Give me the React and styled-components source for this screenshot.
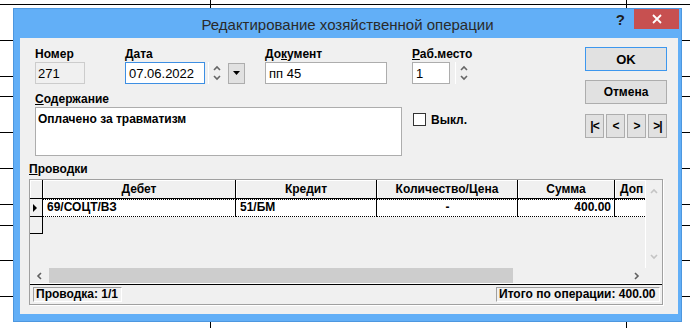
import styled, { createGlobalStyle } from 'styled-components';

const GlobalStyle = createGlobalStyle`
  html, body {
    margin: 0;
    padding: 0;
    background: #ffffff;
  }
  body {
    font-family: "Liberation Sans", Arial, sans-serif;
    color: #000;
  }
`;

const Desktop = styled.div`
  position: relative;
  width: 690px;
  height: 328px;
  overflow: hidden;
  background: #ffffff;
`;

const Sheet = styled.svg`
  position: absolute;
  left: 0;
  top: 0;
`;

const Window = styled.div`
  position: absolute;
  left: 13px;
  top: 8px;
  width: 669px;
  height: 314px;
  box-sizing: border-box;
  background: #62aff7;
  border: 1px solid #4d97df;
  padding: 0 3px 7px 6px;
  display: flex;
  flex-direction: column;
`;

const TitleBar = styled.div`
  height: 29px;
  margin: 0 -3px 0 -6px;
  display: grid;
  grid-template-columns: 1fr auto 1fr;
  align-items: center;
`;

const Title = styled.span`
  font-family: "Liberation Sans", Arial, sans-serif;
  font-size: 15px;
  color: #2a2a2a;
  padding-top: 2px;
  white-space: nowrap;
`;

const TitleControls = styled.div`
  display: flex;
  justify-content: flex-end;
  align-items: flex-start;
  align-self: start;
  gap: 9px;
  padding-right: 2px;
`;

const HelpMark = styled.span`
  font-size: 15px;
  font-weight: bold;
  color: #1e1e1e;
  line-height: 20px;
  padding-top: 1px;
`;

const CloseButton = styled.div`
  width: 45px;
  height: 20px;
  background: #c75050;
  display: flex;
  align-items: center;
  justify-content: center;
`;

const Body = styled.div`
  flex: 1;
  background: #f0f0f0;
  padding: 9px 0 0 9px;
  display: flex;
  flex-direction: column;
`;

const TopArea = styled.div`
  display: flex;
  margin-left: 6px;
`;

const LeftPane = styled.div`
  width: 550px;
  display: flex;
  flex-direction: column;
`;

const FieldRow = styled.div`
  display: grid;
  grid-template-columns: 90px 140px 147px 1fr;
`;

const Field = styled.div`
  display: flex;
  flex-direction: column;
`;

const Label = styled.span`
  font-size: 12px;
  font-weight: bold;
  line-height: 15px;
  height: 15px;
  white-space: nowrap;
`;

const Control = styled.div`
  display: flex;
  align-items: center;
`;

const TextBox = styled.div`
  box-sizing: border-box;
  width: ${(p) => p.$w}px;
  height: 22px;
  border: 1px solid
    ${(p) => (p.$focused ? '#3d8fe3' : p.$disabled ? '#cccccc' : '#adadad')};
  background: ${(p) => (p.$disabled ? '#f0f0f0' : '#ffffff')};
  font-size: 13px;
  line-height: 15px;
  padding: 3px ${(p) => (p.$disabled ? 2 : 3)}px;
  white-space: nowrap;
`;

const Spinner = styled.div`
  box-sizing: border-box;
  width: 14px;
  height: 22px;
  margin-left: ${(p) => p.$gap}px;
  border-left: 1px solid #ffffff;
  display: flex;
  flex-direction: column;
  align-items: center;
  justify-content: center;
  gap: 4px;
  padding-left: 3px;
`;

const DropButton = styled.div`
  box-sizing: border-box;
  width: 17px;
  height: 21px;
  margin-left: 6px;
  background: #e1e1e1;
  border: 1px solid #adadad;
  display: flex;
  align-items: center;
  justify-content: center;
`;

const SecondRow = styled.div`
  display: flex;
  margin-top: 8px;
`;

const Memo = styled.div`
  box-sizing: border-box;
  width: 367px;
  height: 49px;
  background: #ffffff;
  border: 1px solid #adadad;
  padding: 4px 2px 3px;
  font-size: 12px;
  font-weight: bold;
  line-height: 14px;
`;

const CheckRow = styled.div`
  display: flex;
  align-items: center;
  margin: 21px 0 0 11px;
  height: 13px;
`;

const CheckBox = styled.div`
  box-sizing: border-box;
  width: 13px;
  height: 13px;
  background: #ffffff;
  border: 1px solid #333333;
`;

const CheckLabel = styled.span`
  margin-left: 5px;
  font-size: 12px;
  font-weight: bold;
`;

const ButtonCol = styled.div`
  width: 82px;
  display: flex;
  flex-direction: column;
`;

const Button = styled.div`
  box-sizing: border-box;
  width: 82px;
  height: 24px;
  margin-top: ${(p) => p.$mt || 0}px;
  background: #e1e1e1;
  border: 1px solid ${(p) => (p.$default ? '#3d97ee' : '#adadad')};
  font-size: ${(p) => (p.$default ? 13 : 12)}px;
  font-weight: bold;
  display: flex;
  align-items: center;
  justify-content: center;
`;

const NavRow = styled.div`
  display: flex;
  gap: 2px;
  margin-top: 10px;
`;

const NavButton = styled.div`
  box-sizing: border-box;
  width: 19px;
  height: 24px;
  background: #e1e1e1;
  border: 1px solid #adadad;
  font-size: 12px;
  font-weight: bold;
  letter-spacing: -1px;
  display: flex;
  align-items: center;
  justify-content: center;
`;

const SectionLabel = styled(Label)`
  margin-top: 5px;
  line-height: 16px;
  height: 16px;
`;

const Panel = styled.div`
  box-sizing: border-box;
  width: 634px;
  height: 126px;
  margin-top: 2px;
  border: 1px solid #a0a0a0;
  box-shadow: 1px 1px 0 #ffffff;
  display: flex;
  flex-direction: column;
`;

const GridFrame = styled.div`
  display: grid;
  grid-template-columns: 615px 17px;
  grid-template-rows: 88px 15px;
  border-bottom: 1px solid #ffffff;
`;

const GridBody = styled.div`
  overflow: hidden;
  background: #f0f0f0;
`;

const GridRow = styled.div`
  display: grid;
  grid-template-columns: 13px 193px 141px 141px 97px 60px;
  height: ${(p) => p.$h}px;
`;

const HeadCell = styled.div`
  box-sizing: border-box;
  border-right: 1px solid #000;
  border-bottom: 1px solid #000;
  box-shadow: inset 1px 1px 0 #ffffff;
  font-size: 12px;
  font-weight: bold;
  line-height: 18px;
  text-align: ${(p) => p.$align || 'center'};
  padding-left: ${(p) => (p.$align === 'left' ? 5 : 0)}px;
  white-space: nowrap;
  overflow: hidden;
`;

const Indicator = styled.div`
  box-sizing: border-box;
  border-right: 1px solid #000;
  border-bottom: 1px solid #000;
  background: #f0f0f0;
  display: flex;
  align-items: center;
  padding-left: 3px;
`;

const Cell = styled.div`
  box-sizing: border-box;
  background: #ffffff;
  border-right: 1px solid #000;
  border-top: 1px dotted #000;
  border-bottom: 1px dotted #000;
  font-size: 12px;
  font-weight: bold;
  line-height: 15px;
  padding: 0 3px 0 4px;
  text-align: ${(p) => p.$align || 'left'};
  white-space: nowrap;
  overflow: hidden;
`;

const VScroll = styled.div`
  background: #f0f0f0;
  border-left: 1px solid #ffffff;
  display: flex;
  flex-direction: column;
  justify-content: space-between;
  align-items: center;
  padding: 8px 0;
`;

const HScroll = styled.div`
  background: #f0f0f0;
  display: flex;
  align-items: center;
  padding: 0 5px 0 6px;
`;

const Thumb = styled.div`
  width: 464px;
  height: 15px;
  margin-left: 6px;
  background: #cdcdcd;
`;

const Spacer = styled.div`
  flex: 1;
`;

const Corner = styled.div`
  background: #f0f0f0;
`;

const StatusBar = styled.div`
  flex: 1;
  border-top: 1px solid #000;
  display: flex;
  justify-content: space-between;
  align-items: flex-start;
  padding: 2px 2px 0 3px;
`;

const StatusPanel = styled.div`
  box-sizing: border-box;
  width: ${(p) => p.$w}px;
  height: 15px;
  border-top: 1px solid #a0a0a0;
  border-left: 1px solid #a0a0a0;
  border-bottom: 1px solid #ffffff;
  border-right: 1px solid #ffffff;
  font-size: 12px;
  font-weight: bold;
  line-height: 13px;
  padding: 0 2px;
  white-space: nowrap;
`;

const Chevron = ({ dir, color = '#666666' }) => {
  const pts = {
    up: '1,5 4,2 7,5',
    down: '1,1 4,4 7,1',
    left: '5,1 2,4 5,7',
    right: '2,1 5,4 2,7',
  }[dir];
  const vertical = dir === 'up' || dir === 'down';
  return (
    <svg width={vertical ? 8 : 7} height={vertical ? 6 : 8}>
      <polyline points={pts} fill="none" stroke={color} strokeWidth="1.6" />
    </svg>
  );
};

const ArrowDown = () => (
  <svg width="8" height="4">
    <polygon points="0,0 7,0 3.5,4" fill="#000" />
  </svg>
);

const RowMark = () => (
  <svg width="5" height="8">
    <polygon points="0,0 4,4 0,8" fill="#000" />
  </svg>
);

const CloseGlyph = () => (
  <svg width="10" height="10">
    <path d="M1 1 L9 9 M9 1 L1 9" stroke="#fff" strokeWidth="1.8" />
  </svg>
);

const hLines = [4, 40, 76, 96, 132, 168, 204, 225, 260, 296];

const columns = [
  { title: 'Дебет' },
  { title: 'Кредит' },
  { title: 'Количество/Цена' },
  { title: 'Сумма' },
  { title: 'Доп', align: 'left' },
];

const App = () => {
  return (
    <Desktop>
      <GlobalStyle />
      <Sheet width="690" height="328">
        {hLines.map((y) => (
          <line key={y} x1="0" x2="690" y1={y + 0.5} y2={y + 0.5} stroke="#000" />
        ))}
        <line x1="210.5" x2="210.5" y1="0" y2="328" stroke="#000" />
        <line x1="626.5" x2="626.5" y1="0" y2="328" stroke="#000" />
      </Sheet>
      <Window>
        <TitleBar>
          <span />
          <Title>Редактирование хозяйственной операции</Title>
          <TitleControls>
            <HelpMark>?</HelpMark>
            <CloseButton>
              <CloseGlyph />
            </CloseButton>
          </TitleControls>
        </TitleBar>
        <Body>
          <TopArea>
            <LeftPane>
              <FieldRow>
                <Field>
                  <Label>Номер</Label>
                  <TextBox $w={50} $disabled>271</TextBox>
                </Field>
                <Field>
                  <Label>
                    <u>Д</u>ата
                  </Label>
                  <Control>
                    <TextBox $w={80} $focused>07.06.2022</TextBox>
                    <Spinner $gap={3}>
                      <Chevron dir="up" />
                      <Chevron dir="down" />
                    </Spinner>
                    <DropButton>
                      <ArrowDown />
                    </DropButton>
                  </Control>
                </Field>
                <Field>
                  <Label>
                    До<u>к</u>умент
                  </Label>
                  <TextBox $w={122}>пп 45</TextBox>
                </Field>
                <Field>
                  <Label>
                    <u>Р</u>аб.место
                  </Label>
                  <Control>
                    <TextBox $w={38}>1</TextBox>
                    <Spinner $gap={5}>
                      <Chevron dir="up" />
                      <Chevron dir="down" />
                    </Spinner>
                  </Control>
                </Field>
              </FieldRow>
              <SecondRow>
                <Field>
                  <Label>
                    <u>С</u>одержание
                  </Label>
                  <Memo>Оплачено за травматизм</Memo>
                </Field>
                <CheckRow>
                  <CheckBox />
                  <CheckLabel>Выкл.</CheckLabel>
                </CheckRow>
              </SecondRow>
            </LeftPane>
            <ButtonCol>
              <Button $default>OK</Button>
              <Button $mt={9}>Отмена</Button>
              <NavRow>
                <NavButton>|&lt;</NavButton>
                <NavButton>&lt;</NavButton>
                <NavButton>&gt;</NavButton>
                <NavButton>&gt;|</NavButton>
              </NavRow>
            </ButtonCol>
          </TopArea>
          <SectionLabel>
            <u>П</u>роводки
          </SectionLabel>
          <Panel>
            <GridFrame>
              <GridBody>
                <GridRow $h={19}>
                  <HeadCell />
                  {columns.map((c) => (
                    <HeadCell key={c.title} $align={c.align}>
                      {c.title}
                    </HeadCell>
                  ))}
                </GridRow>
                <GridRow $h={18}>
                  <Indicator>
                    <RowMark />
                  </Indicator>
                  <Cell>69/СОЦТ/ВЗ</Cell>
                  <Cell>51/БМ</Cell>
                  <Cell $align="center">-</Cell>
                  <Cell $align="right">400.00</Cell>
                  <Cell />
                </GridRow>
                <GridRow $h={17}>
                  <Indicator />
                </GridRow>
              </GridBody>
              <VScroll>
                <Chevron dir="up" color="#c4c4c4" />
                <Chevron dir="down" color="#c4c4c4" />
              </VScroll>
              <HScroll>
                <Chevron dir="left" color="#606060" />
                <Thumb />
                <Spacer />
                <Chevron dir="right" color="#606060" />
              </HScroll>
              <Corner />
            </GridFrame>
            <StatusBar>
              <StatusPanel $w={89}>Проводка: 1/1</StatusPanel>
              <StatusPanel $w={164}>Итого по операции: 400.00</StatusPanel>
            </StatusBar>
          </Panel>
        </Body>
      </Window>
    </Desktop>
  );
};

export default App;
